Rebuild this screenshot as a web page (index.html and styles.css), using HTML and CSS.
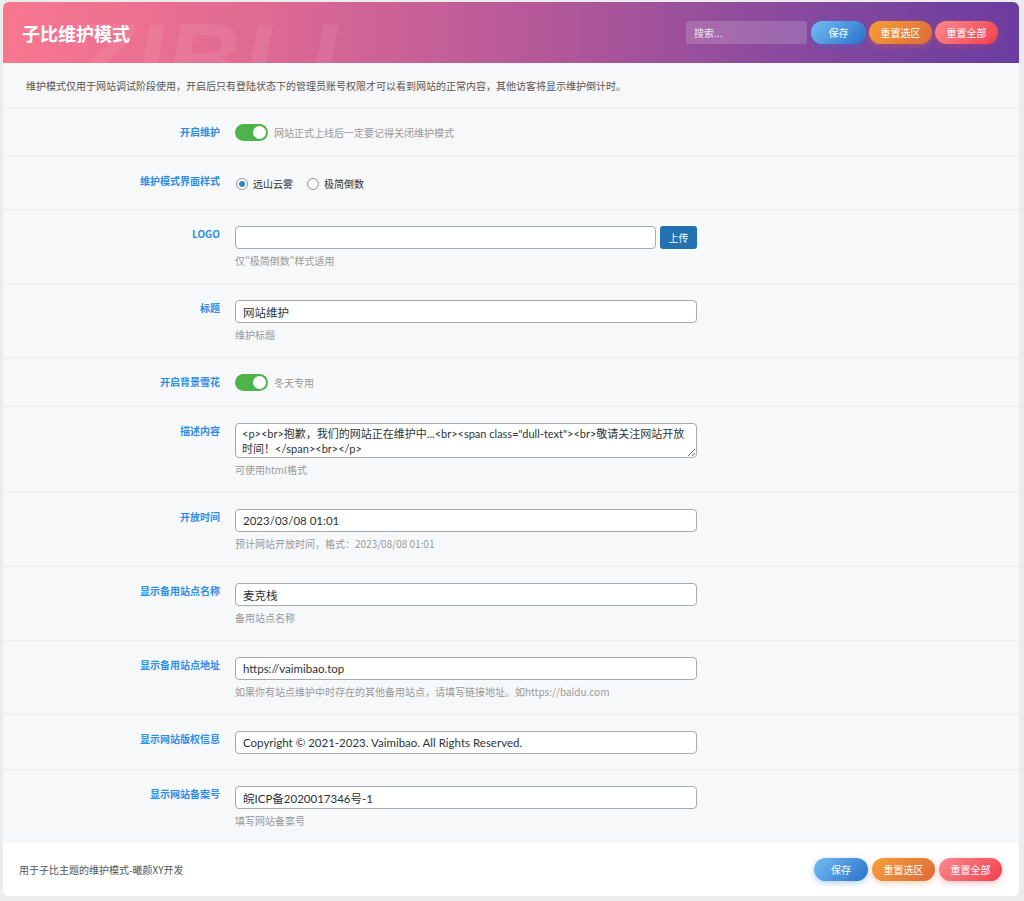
FILE: index.html
```html
<!DOCTYPE html>
<html lang="zh-CN">
<head>
<meta charset="utf-8">
<title>子比维护模式</title>
<link rel="stylesheet" href="styles.css">
</head>
<body>
<div class="card">
  <header class="head">
    <span class="watermark" aria-hidden="true">ZIBLL</span>
    <h1 class="title">子比维护模式</h1>
    <div class="head-tools">
      <input class="search" type="text" placeholder="搜索...">
      <button class="btn btn-blue">保存</button>
      <button class="btn btn-orange">重置选区</button>
      <button class="btn btn-red">重置全部</button>
    </div>
  </header>

  <div class="notice">维护模式仅用于网站调试阶段使用，开启后只有登陆状态下的管理员账号权限才可以看到网站的正常内容，其他访客将显示维护倒计时。</div>

  <div class="row">
    <div class="label">开启维护</div>
    <div class="field inline">
      <span class="toggle"><span class="knob"></span></span>
      <span class="hint">网站正式上线后一定要记得关闭维护模式</span>
    </div>
  </div>

  <div class="row">
    <div class="label">维护模式界面样式</div>
    <div class="field inline radios">
      <label class="radio"><span class="dot on"></span>远山云雾</label>
      <label class="radio"><span class="dot"></span>极简倒数</label>
    </div>
  </div>

  <div class="row">
    <div class="label">LOGO</div>
    <div class="field">
      <div class="upload">
        <input class="input grow" type="text" value="">
        <button class="upbtn">上传</button>
      </div>
      <div class="desc">仅"极简倒数"样式适用</div>
    </div>
  </div>

  <div class="row">
    <div class="label">标题</div>
    <div class="field">
      <input class="input" type="text" value="网站维护">
      <div class="desc">维护标题</div>
    </div>
  </div>

  <div class="row">
    <div class="label">开启背景雪花</div>
    <div class="field inline">
      <span class="toggle"><span class="knob"></span></span>
      <span class="hint">冬天专用</span>
    </div>
  </div>

  <div class="row">
    <div class="label">描述内容</div>
    <div class="field">
      <textarea class="textarea">&lt;p&gt;&lt;br&gt;抱歉，我们的网站正在维护中...&lt;br&gt;&lt;span class="dull-text"&gt;&lt;br&gt;敬请关注网站开放时间！&lt;/span&gt;&lt;br&gt;&lt;/p&gt;</textarea>
      <div class="desc">可使用html格式</div>
    </div>
  </div>

  <div class="row">
    <div class="label">开放时间</div>
    <div class="field">
      <input class="input" type="text" value="2023/03/08 01:01">
      <div class="desc">预计网站开放时间，格式：2023/08/08 01:01</div>
    </div>
  </div>

  <div class="row">
    <div class="label">显示备用站点名称</div>
    <div class="field">
      <input class="input" type="text" value="麦克栈">
      <div class="desc">备用站点名称</div>
    </div>
  </div>

  <div class="row">
    <div class="label">显示备用站点地址</div>
    <div class="field">
      <input class="input" type="text" value="https://vaimibao.top">
      <div class="desc">如果你有站点维护中时存在的其他备用站点，请填写链接地址。如https://baidu.com</div>
    </div>
  </div>

  <div class="row">
    <div class="label">显示网站版权信息</div>
    <div class="field">
      <input class="input" type="text" value="Copyright © 2021-2023. Vaimibao. All Rights Reserved.">
    </div>
  </div>

  <div class="row">
    <div class="label">显示网站备案号</div>
    <div class="field">
      <input class="input" type="text" value="皖ICP备2020017346号-1">
      <div class="desc">填写网站备案号</div>
    </div>
  </div>

  <footer class="foot">
    <span class="foot-text">用于子比主题的维护模式-曦颜XY开发</span>
    <div class="foot-tools">
      <button class="btn btn-blue">保存</button>
      <button class="btn btn-orange">重置选区</button>
      <button class="btn btn-red">重置全部</button>
    </div>
  </footer>
</div>
</body>
</html>
```
FILE: styles.css
```css
* { box-sizing: border-box; }

html, body {
  margin: 0;
  background: #ececec;
}

body {
  padding: 2px 5px 8px 3px;
  font-family: "Noto Sans CJK SC", "Noto Sans", sans-serif;
  color: #333;
}

.card {
  width: 1016px;
  background: #f7f8fa;
  border-radius: 6px;
  overflow: hidden;
}

.head {
  position: relative;
  height: 61px;
  display: flex;
  align-items: center;
  justify-content: space-between;
  padding: 0 21px 0 19px;
  background: linear-gradient(90deg, #f8778f 0%, #e06a93 25%, #b95a98 50%, #8c4b9e 75%, #6a3da0 100%);
  overflow: hidden;
}

.watermark {
  position: absolute;
  left: 66px;
  top: 0;
  display: block;
  height: 61px;
  overflow: hidden;
  padding-top: 6px;
  font-family: "Liberation Sans", sans-serif;
  font-weight: 900;
  font-style: italic;
  font-size: 104px;
  letter-spacing: 2px;
  color: rgba(255, 255, 255, 0.07);
  line-height: 1;
  pointer-events: none;
}

.title {
  position: relative;
  margin: 0;
  color: #fff;
  font-size: 18px;
  font-weight: 700;
}

.head-tools, .foot-tools {
  position: relative;
  display: flex;
  align-items: center;
  gap: 3px;
}

.search {
  width: 121px;
  height: 23px;
  margin-right: 1px;
  border: 0;
  border-radius: 3px;
  background: rgba(255, 255, 255, 0.17);
  color: #fff;
  font-family: inherit;
  font-size: 10px;
  padding: 0 8px;
  outline: none;
}
.search::placeholder { color: rgba(255, 255, 255, 0.85); }

.btn {
  height: 23px;
  border: 0;
  border-radius: 12px;
  color: #fff;
  font-family: inherit;
  font-size: 10px;
  padding: 0;
  white-space: nowrap;
  cursor: pointer;
}
.btn-blue {
  width: 55px;
  background: linear-gradient(135deg, #72bdf5, #2a71c8);
  box-shadow: 0 2px 6px rgba(40, 120, 220, 0.35);
}
.btn-orange {
  width: 63px;
  background: linear-gradient(135deg, #f5a03a, #dd6a3a);
  box-shadow: 0 2px 6px rgba(230, 120, 40, 0.35);
}
.btn-red {
  width: 63px;
  background: linear-gradient(135deg, #fa8a8e, #f0404c);
  box-shadow: 0 2px 6px rgba(240, 70, 80, 0.35);
}

.notice {
  height: 45px;
  display: flex;
  align-items: center;
  padding-left: 23px;
  font-size: 10px;
  color: #555;
  border-bottom: 1px solid #eceef1;
}

.row {
  display: grid;
  grid-template-columns: 217px 462px;
  column-gap: 15px;
  padding: 16px 0 15px;
  border-bottom: 1px solid #eceef1;
}
.row:last-of-type { border-bottom: 0; }

.label {
  text-align: right;
  font-size: 10px;
  font-weight: 700;
  line-height: 15px;
  color: #2b8ee8;
}

.field { min-width: 0; }

.inline {
  display: flex;
  align-items: center;
  height: 17px;
}

.toggle {
  position: relative;
  width: 33px;
  height: 17px;
  border-radius: 9px;
  background: #4cb44a;
  flex: none;
}
.knob {
  position: absolute;
  right: 2px;
  top: 2px;
  width: 13px;
  height: 13px;
  border-radius: 50%;
  background: #fff;
}

.hint {
  margin-left: 6px;
  font-size: 10px;
  color: #999;
}

.radios {
  height: 21px;
  gap: 13px;
}
.radio {
  display: flex;
  align-items: center;
  font-size: 10px;
  color: #333;
}
.dot {
  position: relative;
  width: 12px;
  height: 12px;
  margin: 0 5px 0 1px;
  border: 1px solid #8c8f94;
  border-radius: 50%;
  background: #fff;
}
.dot.on::after {
  content: "";
  position: absolute;
  left: 2px;
  top: 2px;
  width: 6px;
  height: 6px;
  border-radius: 50%;
  background: #3582c4;
}

.input, .textarea {
  display: block;
  width: 462px;
  height: 23px;
  border: 1px solid #a7aaad;
  border-radius: 4px;
  background: #fff;
  padding: 0 7px;
  font-family: "Lato", "Noto Sans CJK SC", sans-serif;
  font-size: 11.5px;
  color: #2c3338;
  outline: none;
}

.upload {
  display: flex;
  gap: 4px;
}
.grow { width: 421px; }
.upbtn {
  width: 37px;
  height: 23px;
  border: 0;
  border-radius: 3px;
  background: #2271b1;
  color: #fff;
  font-family: inherit;
  font-size: 10px;
  padding: 0;
}

.textarea {
  height: 35px;
  padding: 2px 6px;
  font-size: 11px;
  line-height: 15px;
  resize: vertical;
  overflow: hidden;
}

.desc {
  margin-top: 5px;
  font-size: 10px;
  line-height: 14px;
  color: #999;
}

.foot {
  height: 53px;
  display: flex;
  align-items: center;
  justify-content: space-between;
  padding: 0 17px 0 16px;
  background: #fff;
}
.foot-text {
  font-size: 10px;
  color: #555;
}
.foot-tools { gap: 4px; }
.foot-tools .btn-blue { width: 54px; }
```
